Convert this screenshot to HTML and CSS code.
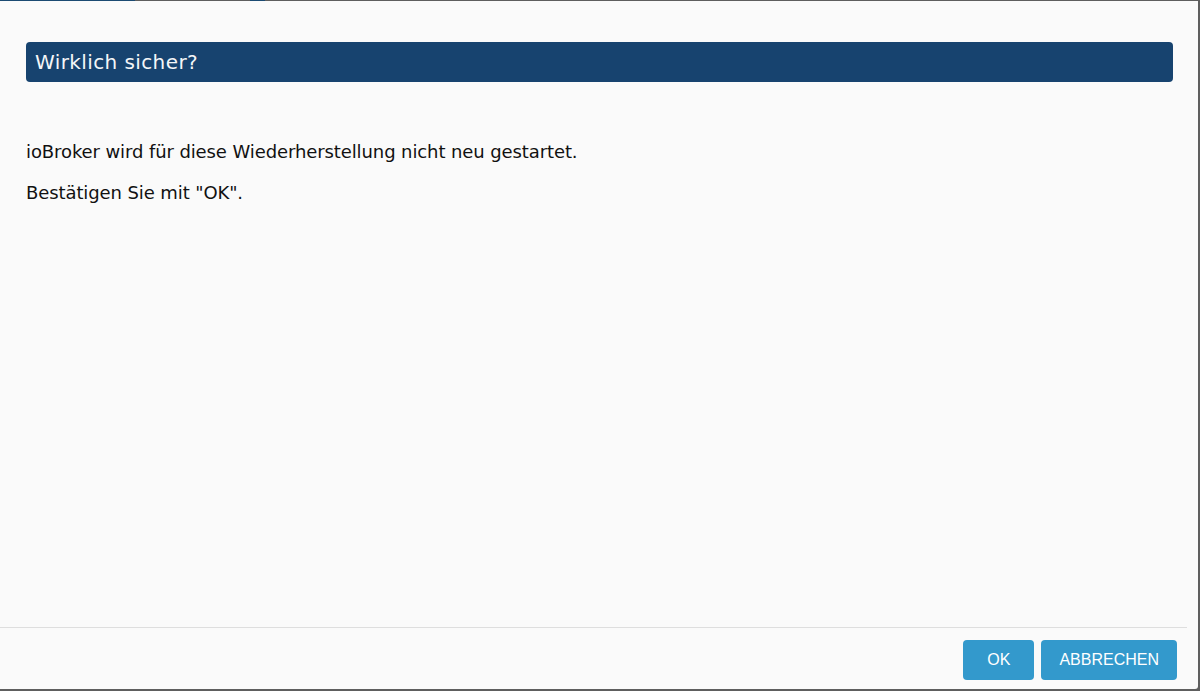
FILE: index.html
```html
<!DOCTYPE html>
<html lang="de">
<head>
    <meta charset="UTF-8">
    <meta name="viewport" content="width=device-width, initial-scale=1.0">
    <title>Wirklich sicher?</title>
    <link rel="stylesheet" href="styles.css">
</head>
<body>
    <div class="backdrop-strip">
        <span class="strip-blue"></span>
        <span class="strip-blue small"></span>
    </div>
    <div class="dialog">
        <div class="dialog-head">
            <h2 class="dialog-title">Wirklich sicher?</h2>
        </div>
        <div class="dialog-body">
            <p>ioBroker wird für diese Wiederherstellung nicht neu gestartet.</p>
            <p>Bestätigen Sie mit "OK".</p>
        </div>
        <div class="dialog-footer">
            <button class="btn btn-ok">OK</button>
            <button class="btn">ABBRECHEN</button>
        </div>
    </div>
</body>
</html>
```

FILE: styles.css
```css
html, body { margin: 0; height: 100%; overflow: hidden; }
body { background-color: #5e5e5e; font-family: "DejaVu Sans", Verdana, sans-serif; }
.backdrop-strip { height: 1px; display: flex; gap: 115px; }
.strip-blue { width: 135px; background-color: #1b4a72; }
.strip-blue.small { width: 15px; }
.dialog { width: 1198px; height: 688px; background-color: #fafafa; display: flex; flex-direction: column; border-bottom-right-radius: 3px; }
.dialog-head { padding: 41px 25px 0 26px; }
.dialog-title { margin: 0; height: 40px; line-height: 40px; padding: 0 9px; background-color: #17436f; color: #f4f6f8; font-size: 20px; font-weight: normal; border-radius: 4px; letter-spacing: 0.4px; }
.dialog-body { flex: 1; padding: 59px 26px 0; color: #111; font-size: 18px; letter-spacing: -0.1px; }
.dialog-body p { margin: 0 0 19px; line-height: 22px; }
.dialog-footer { margin-right: 11px; border-top: 1px solid #dedede; padding: 12px 10px 9px 0; display: flex; justify-content: flex-end; gap: 7px; }
.btn { height: 40px; padding: 0 18px; background-color: #3399cc; color: #fff; border: none; border-radius: 4px; font-family: "Liberation Sans", Arial, sans-serif; font-size: 16px; cursor: pointer; }
.btn-ok { width: 71px; padding: 0; }
.btn:hover { background-color: #2b86b3; }
```
